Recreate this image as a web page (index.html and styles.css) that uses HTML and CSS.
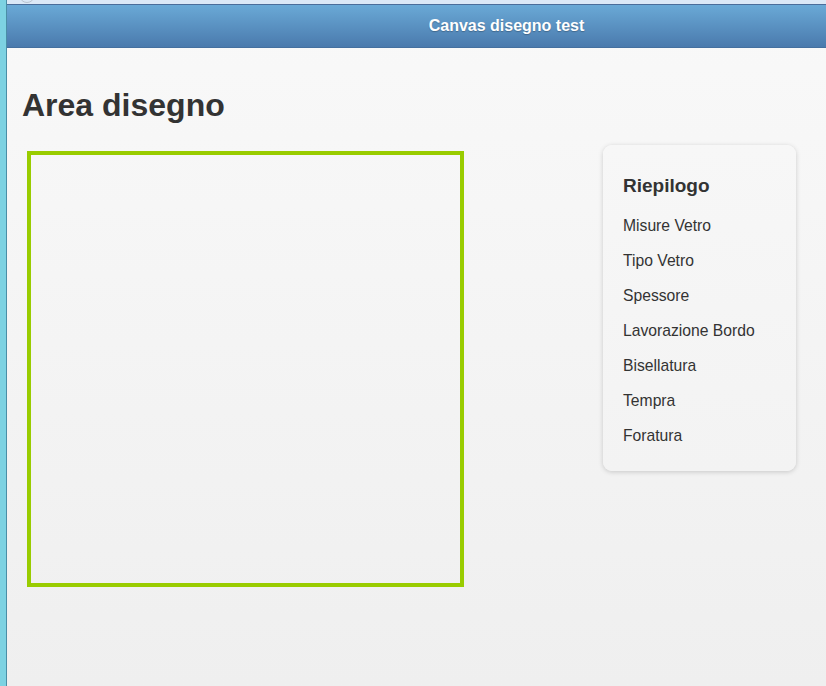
FILE: index.html
```html
<!DOCTYPE html>
<html lang="it">
<head>
<meta charset="utf-8">
<title>Canvas disegno test</title>
<link rel="stylesheet" href="styles.css">
</head>
<body>
<div class="frame">
  <div class="side-strip"></div>
  <div class="window">
    <div class="top-strip"><span class="top-circle"></span></div>
    <header class="app-header">Canvas disegno test</header>
    <main class="content">
      <section class="draw-col">
        <h1 class="draw-title">Area disegno</h1>
        <div class="draw-canvas"></div>
      </section>
      <aside class="summary">
        <h3 class="summary-title">Riepilogo</h3>
        <ul class="summary-list">
          <li>Misure Vetro</li>
          <li>Tipo Vetro</li>
          <li>Spessore</li>
          <li>Lavorazione Bordo</li>
          <li>Bisellatura</li>
          <li>Tempra</li>
          <li>Foratura</li>
        </ul>
      </aside>
    </main>
  </div>
</div>
</body>
</html>
```

FILE: styles.css
```css
html, body {
  margin: 0;
  padding: 0;
  height: 100%;
}
body {
  font-family: "Liberation Sans", Arial, sans-serif;
  color: #333;
  overflow: hidden;
}
.frame {
  display: flex;
  height: 686px;
}
.side-strip {
  width: 6px;
  background: #7dd2e2;
  border-right: 1px solid #4a8ea6;
  flex: none;
}
.window {
  flex: 1;
  display: flex;
  flex-direction: column;
  background: linear-gradient(#f9f9f9, #efefef);
}
.top-strip {
  height: 4px;
  background: #dbe8f6;
  border-bottom: 1px solid #4b6d9a;
  position: relative;
  overflow: hidden;
}
.top-circle {
  position: absolute;
  left: 12px;
  top: -13px;
  width: 14px;
  height: 14px;
  border: 1px solid #b9c3cf;
  border-radius: 50%;
}
.app-header {
  height: 43px;
  line-height: 41px;
  background: linear-gradient(#6aa9d6, #4a7aad);
  border-bottom: 1px solid #44709f;
  color: #fff;
  font-weight: bold;
  font-size: 16px;
  text-align: center;
  padding-left: 180px;
  box-sizing: border-box;
  text-shadow: 0 1px 1px rgba(0, 0, 0, 0.25);
}
.content {
  flex: 1;
  display: flex;
  align-items: flex-start;
  justify-content: space-between;
  padding: 0 30px 0 15px;
}
.draw-col {
  padding-top: 39px;
}
.draw-title {
  margin: 0 0 27px;
  font-size: 32px;
  font-weight: bold;
  line-height: 37px;
  color: #333;
}
.draw-canvas {
  margin-left: 5px;
  width: 429px;
  height: 428px;
  border: 4px solid #99cc00;
}
.summary {
  margin-top: 97px;
  width: 193px;
  box-sizing: border-box;
  padding: 30px 20px 18px;
  border-radius: 9px;
  background: linear-gradient(#f7f7f7, #f3f3f3);
  box-shadow: 0 1px 5px rgba(0, 0, 0, 0.18);
}
.summary-title {
  margin: 0 0 11px;
  font-size: 19px;
  line-height: 22px;
  font-weight: bold;
  color: #333;
}
.summary-list {
  list-style: none;
  margin: 0;
  padding: 0;
}
.summary-list li {
  font-size: 15.7px;
  line-height: 35px;
  color: #333;
}
```
